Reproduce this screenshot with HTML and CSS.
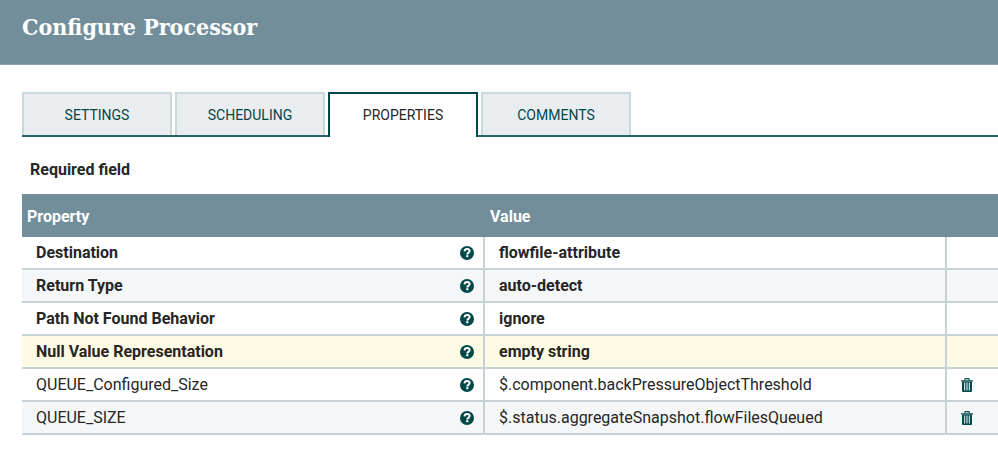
FILE: index.html
```html
<!DOCTYPE html>
<html lang="en">
<head>
<meta charset="utf-8">
<title>Configure Processor</title>
<link rel="stylesheet" href="styles.css">
</head>
<body>
<svg class="defs" aria-hidden="true">
  <symbol id="help" viewBox="0 0 14 14">
    <circle cx="7" cy="7" r="7" fill="currentColor"/>
    <path d="M4.500 5.300C4.700 3.800 5.700 3.100 7.100 3.100c1.500 0 2.500.8 2.500 2 0 1.800-2.300 1.700-2.300 3.300" fill="none" stroke="#fff" stroke-width="2"/>
    <rect x="6.200" y="9.200" width="2.200" height="2" fill="#fff"/>
  </symbol>
  <symbol id="trash" viewBox="0 0 12 14">
    <path d="M3.800 2.500V1.300Q3.800.6 4.500.6h3Q8.200.6 8.200 1.300v1.200" fill="none" stroke="currentColor" stroke-width="1.100"/>
    <path d="M0 2.300h12v1.200H0z" fill="currentColor"/>
    <path fill-rule="evenodd" d="M1 3.500h10V13q0 1-1 1H2q-1 0-1-1zM3.200 4.600v7.900h1V4.600zM5.500 4.600v7.900h1V4.600zM7.800 4.600v7.900h1V4.600z" fill="currentColor"/>
  </symbol>
</svg>
<header class="dialog-header"><h1>Configure Processor</h1></header>
<main>
  <div class="tabs" role="tablist">
    <button class="tab" role="tab" type="button">SETTINGS</button>
    <button class="tab" role="tab" type="button">SCHEDULING</button>
    <button class="tab selected" role="tab" type="button" aria-selected="true">PROPERTIES</button>
    <button class="tab" role="tab" type="button">COMMENTS</button>
  </div>
  <p class="required">Required field</p>
  <table>
    <colgroup><col class="col-property"><col class="col-value"><col></colgroup>
    <thead>
      <tr><th>Property</th><th>Value</th><th></th></tr>
    </thead>
    <tbody>
      <tr class="builtin"><td><div class="property">Destination<svg class="help"><use href="#help"/></svg></div></td><td>flowfile-attribute</td><td></td></tr>
      <tr class="builtin"><td><div class="property">Return Type<svg class="help"><use href="#help"/></svg></div></td><td>auto-detect</td><td></td></tr>
      <tr class="builtin"><td><div class="property">Path Not Found Behavior<svg class="help"><use href="#help"/></svg></div></td><td>ignore</td><td></td></tr>
      <tr class="builtin active"><td><div class="property">Null Value Representation<svg class="help"><use href="#help"/></svg></div></td><td>empty string</td><td></td></tr>
      <tr><td><div class="property">QUEUE_Configured_Size<svg class="help"><use href="#help"/></svg></div></td><td>$.component.backPressureObjectThreshold</td><td><button class="delete" type="button" aria-label="Delete"><svg><use href="#trash"/></svg></button></td></tr>
      <tr><td><div class="property">QUEUE_SIZE<svg class="help"><use href="#help"/></svg></div></td><td>$.status.aggregateSnapshot.flowFilesQueued</td><td><button class="delete" type="button" aria-label="Delete"><svg><use href="#trash"/></svg></button></td></tr>
    </tbody>
  </table>
</main>
</body>
</html>
```
FILE: styles.css
```css
* { box-sizing: border-box; }
body {
  margin: 0;
  background: #fff;
  color: #262626;
  font: 16px/20px Roboto, "Liberation Sans", sans-serif;
}
.defs { display: none; }
.dialog-header {
  background: #728e9b;
  padding: 11px 22px 21px;
  border-bottom: 1px solid #8da4ae;
}
h1 {
  margin: 0;
  color: #fff;
  font: 700 23px/32px "Roboto Slab", "DejaVu Serif Condensed", "DejaVu Serif", serif;
}
main { padding: 27px 0 0 22px; }
.tabs {
  display: flex;
  gap: 3px;
  border-bottom: 2px solid #2b6467;
}
.tab {
  width: 150px;
  height: 43px;
  padding: 0;
  border: 2px solid #c7d9d9;
  border-bottom: 0;
  background: #e9edf0;
  color: #004849;
  font: 400 14px/20px Roboto, "Liberation Sans", sans-serif;
}
.tab.selected {
  height: 45px;
  margin-bottom: -2px;
  padding-bottom: 2px;
  border-color: #004849;
  background: #fff;
  color: #262626;
}
.required {
  margin: 0;
  padding: 23px 8px 14px;
  font-weight: 700;
}
table {
  width: 100%;
  table-layout: fixed;
  border-collapse: separate;
  border-spacing: 0;
}
.col-property { width: 463px; }
.col-value { width: 462px; }
th {
  height: 43px;
  padding: 2px 5px 0;
  background: #728e9b;
  color: #fff;
  font-weight: 700;
  text-align: left;
}
td {
  height: 33px;
  padding: 0 14px;
  border-right: 2px solid #c7d2d7;
  border-bottom: 2px solid #c7d2d7;
}
td:first-child { padding-right: 9px; }
td:last-child { border-right: 0; }
tbody tr:nth-child(even) { background: #f4f6f7; }
tbody tr.active { background: #fffae4; }
.builtin { font-weight: 700; }
.property {
  display: flex;
  align-items: center;
  justify-content: space-between;
}
.help { width: 14px; height: 14px; color: #004849; }
.delete {
  display: block;
  padding: 0;
  border: 0;
  background: none;
  color: #004849;
}
.delete svg { display: block; width: 12px; height: 14px; }
```
